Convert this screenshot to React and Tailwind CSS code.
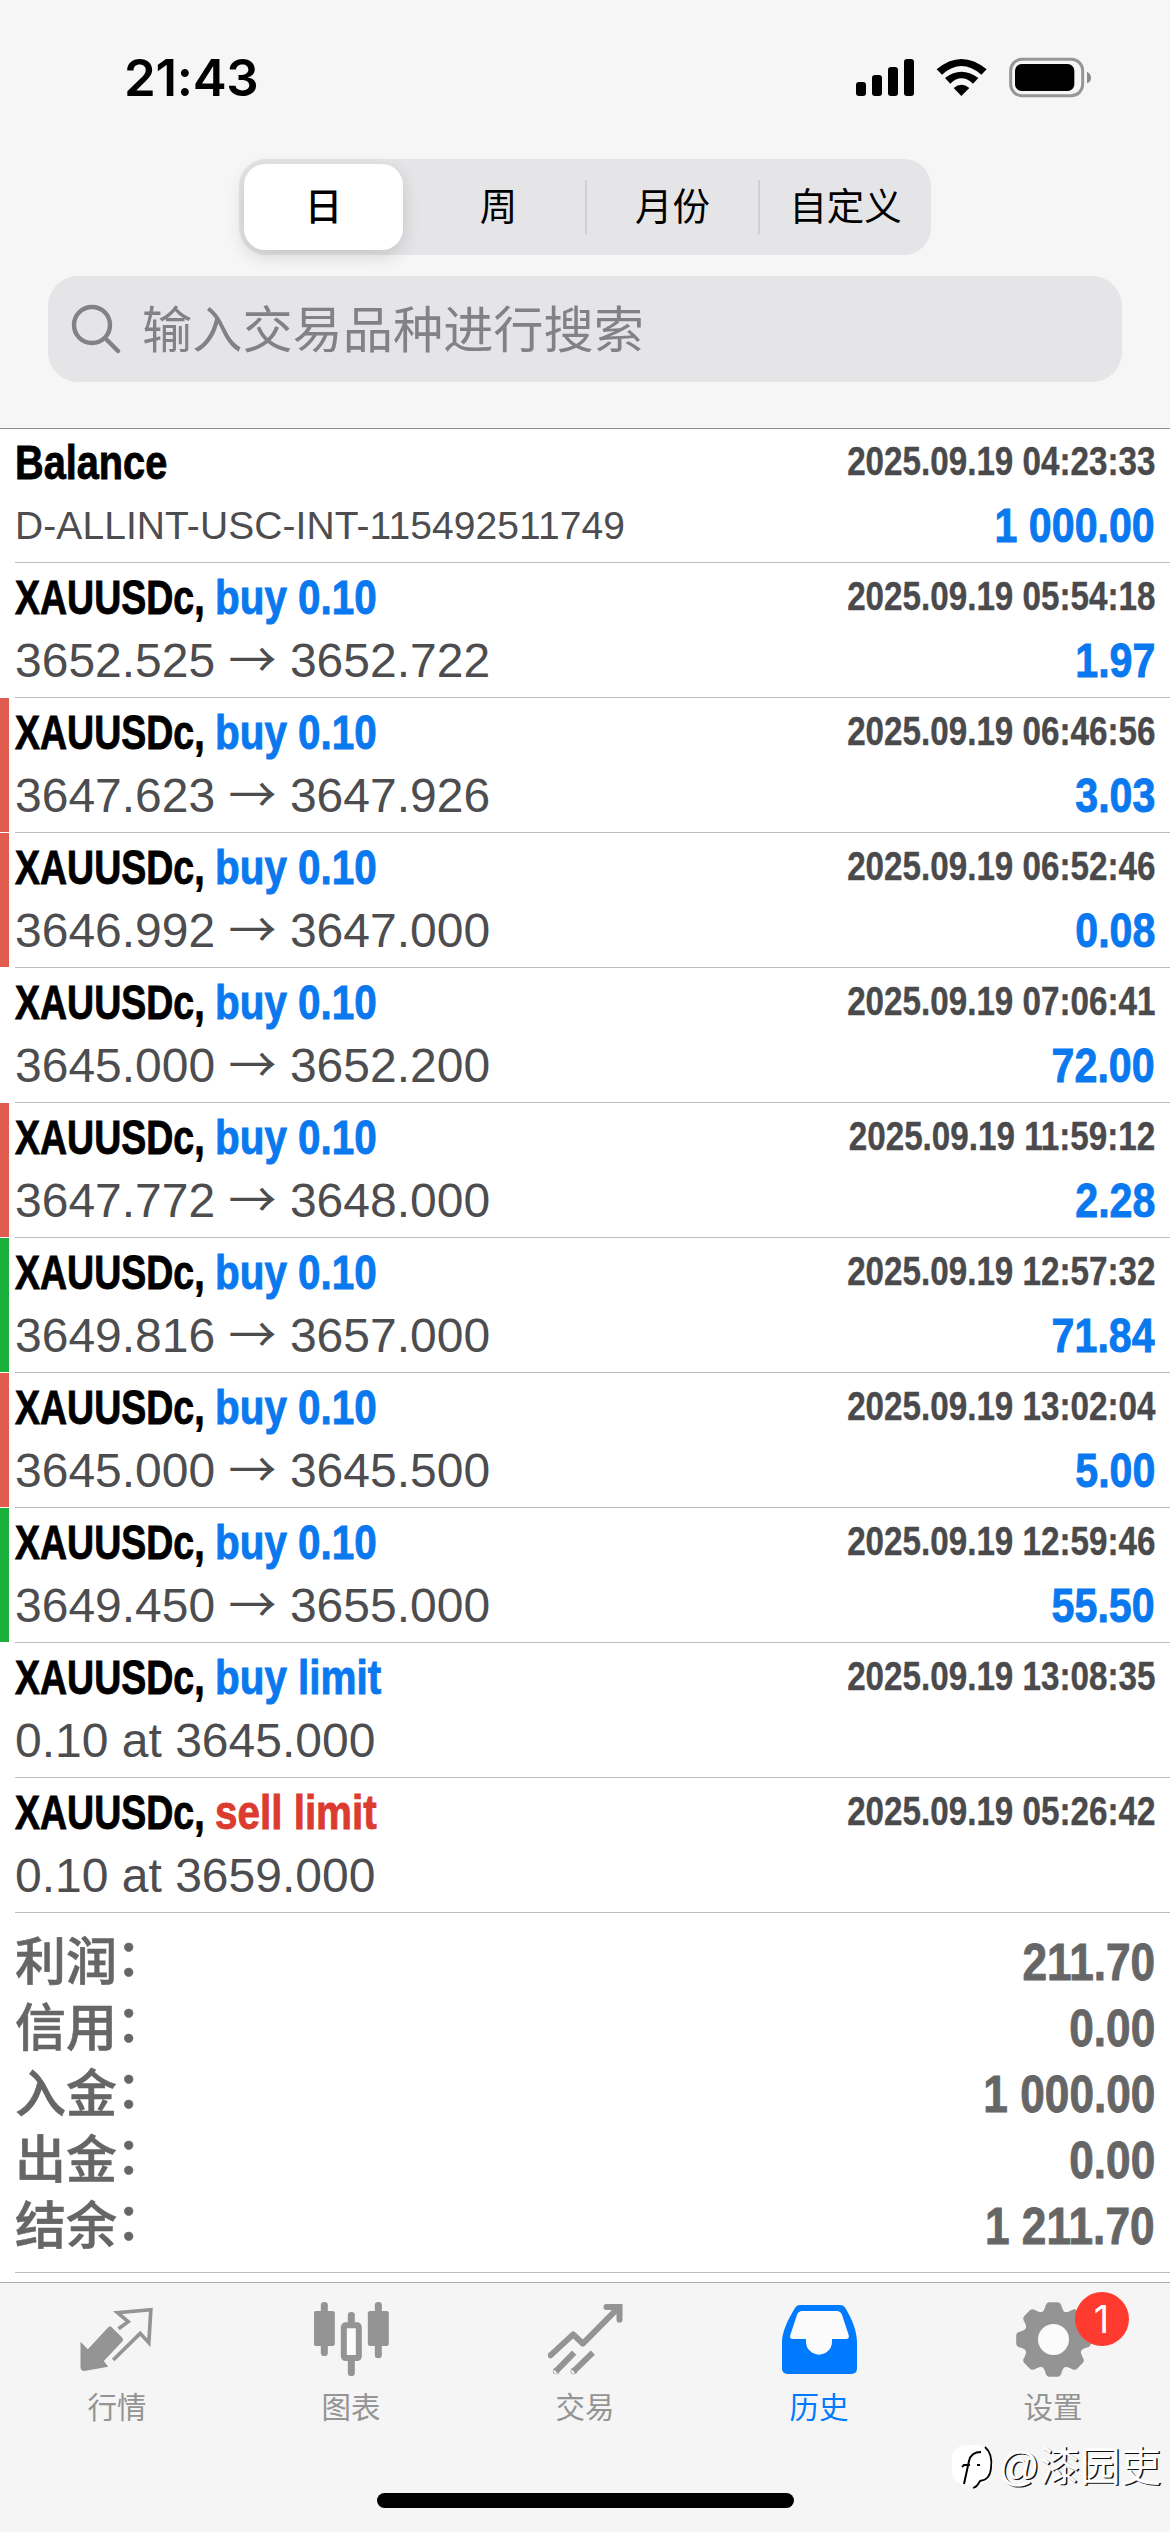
const PERIODS = ['日', '周', '月份', '自定义'];

const DEALS = [
  { open: '3652.525', close: '3652.722', time: '2025.09.19 05:54:18', profit: '1.97' },
  { open: '3647.623', close: '3647.926', time: '2025.09.19 06:46:56', profit: '3.03', hit: 'sl' },
  { open: '3646.992', close: '3647.000', time: '2025.09.19 06:52:46', profit: '0.08', hit: 'sl' },
  { open: '3645.000', close: '3652.200', time: '2025.09.19 07:06:41', profit: '72.00' },
  { open: '3647.772', close: '3648.000', time: '2025.09.19 11:59:12', profit: '2.28', hit: 'sl' },
  { open: '3649.816', close: '3657.000', time: '2025.09.19 12:57:32', profit: '71.84', hit: 'tp' },
  { open: '3645.000', close: '3645.500', time: '2025.09.19 13:02:04', profit: '5.00', hit: 'sl' },
  { open: '3649.450', close: '3655.000', time: '2025.09.19 12:59:46', profit: '55.50', hit: 'tp' },
];

const SUMMARY = [
  ['利润', '211.70'],
  ['信用', '0.00'],
  ['入金', '1 000.00'],
  ['出金', '0.00'],
  ['结余', '1 211.70'],
];

function StatusBar() {
  return (
    <div className="flex h-[155px] items-center justify-between pl-[124px] pr-[78px]">
      <span className="font-['Inter',sans-serif] text-[51px] font-semibold leading-none tracking-[-0.3px]">21:43</span>
      <svg className="h-[41px] w-[236px]" viewBox="48 36 708 123">
        <rect x="48" y="111" width="30" height="42" rx="9" />
        <rect x="96" y="90" width="30" height="63" rx="9" />
        <rect x="144" y="66" width="30" height="87" rx="9" />
        <rect x="192" y="42" width="30" height="111" rx="9" />
        <path d="M290 73Q364 11 440 73L424 89Q364 37 306 89Z" />
        <path d="M315 99Q364 61 415 99L399 116Q364 84 331 116Z" />
        <path d="M341 129Q364 109 388 129L364 153Z" />
        <rect x="512" y="43" width="216" height="109" rx="34" fill="none" stroke="#969696" strokeWidth="9" />
        <rect x="525" y="57" width="178" height="81" rx="20" />
        <path d="M741 80Q753 86 753 98Q753 110 741 115Z" fill="#8a8a8a" />
      </svg>
    </div>
  );
}

function PeriodSwitch() {
  return (
    <div className="mx-auto mt-[4px] flex h-[96px] w-[692px] items-center rounded-[27px] bg-[#e5e5e7] text-[37.5px] leading-none">
      {PERIODS.map((p, i) => (
        <div key={p} className="flex h-full flex-1 items-center">
          <div className={i > 1 ? 'h-[54px] w-[2px] bg-[#d0d0d2]' : 'h-[54px] w-0'} />
          <div
            className={
              i === 0
                ? 'ml-[5px] flex h-[86px] w-[159px] items-center justify-center rounded-[21px] bg-white pt-[2px] font-medium shadow-[0_6px_18px_rgba(0,0,0,0.14)]'
                : 'flex flex-1 items-center justify-center pt-[2px]'
            }
          >
            {p}
          </div>
        </div>
      ))}
    </div>
  );
}

function SearchBox() {
  return (
    <div className="mx-[48px] mt-[21px] flex h-[106px] items-center rounded-[30px] bg-[#e5e5e7] pl-[23px] text-[#828286]">
      <svg className="h-[50px] w-[50px]" viewBox="0 0 50 50" fill="none" stroke="currentColor" strokeWidth="4.4" strokeLinecap="round">
        <circle cx="21" cy="21" r="18" />
        <path d="M34.500 34.500L47 47" />
      </svg>
      <span className="ml-[21px] pt-[5px] text-[50.2px] leading-none">输入交易品种进行搜索</span>
    </div>
  );
}

function Row({ title, detail, time, value, hit }) {
  return (
    <div className="flex h-[135px] gap-[6px]">
      <div className={`h-[134px] w-[9px] ${hit === 'sl' ? 'bg-[#e05c4f]' : hit === 'tp' ? 'bg-[#1bb03c]' : ''}`} />
      <div className="flex-1 border-b border-[#bebec0] pr-[15px]">
        <div className="flex h-[68px] items-start justify-between whitespace-nowrap font-bold">
          <div className="flex text-[49px] leading-[68px] [-webkit-text-stroke:0.9px_currentColor]">{title}</div>
          <span className="origin-right scale-x-[0.83] text-[40px] leading-[66px] text-[#4a4a4c] [-webkit-text-stroke:0.4px_currentColor]">{time}</span>
        </div>
        <div className="flex items-start justify-between whitespace-nowrap leading-[58px]">
          <div className="pt-px text-[48px] text-[#4d4d4f]">{detail}</div>
          <span className="origin-right scale-x-[0.84] text-[49px] font-bold text-[#0a78ee] [-webkit-text-stroke:0.9px_currentColor]">{value}</span>
        </div>
      </div>
    </div>
  );
}

function Title({ side, children }) {
  return (
    <>
      <span className="w-[200px] origin-left scale-x-[0.765]">XAUUSDc,</span>
      <span className={`origin-left scale-x-[0.825] ${side === 'sell' ? 'text-[#dc3c30]' : 'text-[#0a78ee]'}`}>{children}</span>
    </>
  );
}

function QuotesIcon() {
  return (
    <svg className="size-[75px]" viewBox="58.5 36 225 225" fill="currentColor">
      <path d="M60 155L82 178L144 111Q148 106 153 111L186 144Q190 149 186 154L130 213L143 230L72 243Q60 243 60 232Z" />
      <path d="M174 116L203 95L171 68L271 59L265 158L239 130L158 210" fill="none" stroke="currentColor" strokeWidth="11" />
    </svg>
  );
}

function ChartIcon() {
  return (
    <svg className="size-[75px]" viewBox="759.5 36 225 225" fill="currentColor">
      <rect x="759" y="63" width="63" height="105" rx="7" />
      <rect x="780" y="36" width="21" height="162" rx="10" />
      <rect x="921" y="63" width="63" height="105" rx="7" />
      <rect x="942" y="36" width="21" height="169" rx="10" />
      <rect x="861" y="66" width="21" height="40" rx="10" />
      <rect x="861" y="205" width="21" height="53" rx="10" />
      <rect x="849" y="106" width="45" height="98" rx="5" fill="#fbfbfb" stroke="currentColor" strokeWidth="18" />
    </svg>
  );
}

function TradeIcon() {
  return (
    <svg className="size-[75px]" viewBox="22.5 51 225 225" fill="none" stroke="currentColor" strokeWidth="18">
      <path d="M30 211L98 148L127 176L234 68" strokeLinecap="round" strokeLinejoin="round" />
      <path d="M198 66H237V104" strokeLinecap="round" />
      <path d="M46 259L101 203M99 259L157 203" />
      <circle cx="47" cy="258" r="1" />
      <circle cx="100" cy="258" r="1" />
    </svg>
  );
}

function HistoryIcon() {
  return (
    <svg className="size-[75px]" viewBox="723 51 225 225" fill="currentColor">
      <path d="M762 69Q767 60 777 60H897Q908 60 913 69C935 105 948 140 948 172V250Q948 267 931 267H740Q723 267 723 250V172C723 140 740 105 762 69Z" />
      <path d="M783 78H888Q898 78 903 89L923 150Q926 162 915 162H873V170A39 39 0 0 1 795 170V162H756Q744 162 748 150L768 89Q773 78 783 78Z" fill="#fbfbfb" />
    </svg>
  );
}

function SettingsIcon() {
  return (
    <svg className="size-[75px]" viewBox="-112.5 -112.5 225 225" fill="currentColor">
      <circle r="68" fill="#fbfbfb" stroke="currentColor" strokeWidth="43" />
      {[0, 45, 90, 135, 180, 225, 270, 315].map((a) => (
        <path key={a} d="M-36 -80Q-28 -86 -25 -97Q-22 -112 -12 -112H12Q22 -112 25 -97Q28 -86 36 -80Z" transform={`rotate(${a})`} />
      ))}
    </svg>
  );
}

const TABS = [
  { label: '行情', Icon: QuotesIcon },
  { label: '图表', Icon: ChartIcon },
  { label: '交易', Icon: TradeIcon },
  { label: '历史', Icon: HistoryIcon, active: true },
  { label: '设置', Icon: SettingsIcon, badge: 1 },
];

function TabBar() {
  return (
    <nav className="relative mt-[9px] flex h-[250px] flex-col justify-between border-t border-[#a9a9ab] bg-[#f5f5f5]">
      <div className="flex pt-[19px]">
        {TABS.map(({ label, Icon, active, badge }) => (
          <div key={label} className={`flex flex-1 flex-col items-center ${active ? 'text-[#007aff]' : 'text-[#949494]'}`}>
            <div className="relative">
              <Icon />
              {badge && (
                <span className="absolute -right-[38px] -top-[10px] flex size-[54px] items-center justify-center rounded-full bg-[#ff3b30] font-['Inter',sans-serif] text-[38px] leading-none text-white">
                  {badge}
                </span>
              )}
            </div>
            <span className="mt-[16px] text-[29.5px] leading-[30px]">{label}</span>
          </div>
        ))}
      </div>
      <div className="mx-auto mb-[24px] h-[15px] w-[417px] rounded-full bg-black" />
      <Watermark />
    </nav>
  );
}

function Watermark() {
  return (
    <div className="absolute right-[9px] top-[159px] flex items-center gap-[3px]">
      <svg className="h-[50px] w-[44px]" viewBox="0 0 44 50">
        <rect x="1" y="3" width="38" height="40" rx="14" fill="#fff" />
        <path d="M34 5Q42 12 40 26Q39 38 29 39Q26 45 22 46" fill="none" stroke="#000" strokeWidth="1.800" />
        <path d="M30 10Q20 10 18 19L13 42M11 25L13 23H19M26 23H29" fill="none" stroke="#000" strokeWidth="2" />
      </svg>
      <span className="text-[40.5px] leading-[48px] text-white [text-shadow:1.5px_1px_0_#111]">@漆园吏</span>
    </div>
  );
}

export default function App() {
  return (
    <div className="flex h-[2532px] w-[1170px] flex-col overflow-hidden bg-white font-['Liberation_Sans','Noto_Sans_CJK_SC',sans-serif] text-black">
      <header className="relative z-10 h-[429px] border-b border-[#8f8f91] bg-[#f6f6f6]">
        <StatusBar />
        <PeriodSwitch />
        <SearchBox />
      </header>

      <main className="-mt-px">
        <Row
          title={<span className="origin-left scale-x-[0.81]">Balance</span>}
          detail={<span className="block text-[39px] tracking-[0.08px]">D-ALLINT-USC-INT-115492511749</span>}
          time="2025.09.19 04:23:33"
          value="1 000.00"
        />
        {DEALS.map((d) => (
          <Row
            key={d.time}
            title={<Title>buy 0.10</Title>}
            detail={
              <>
                {d.open} <span className="font-['Noto_Sans_CJK_SC'] leading-none">→</span> {d.close}
              </>
            }
            time={d.time}
            value={d.profit}
            hit={d.hit}
          />
        ))}
        <Row title={<Title>buy limit</Title>} detail="0.10 at 3645.000" time="2025.09.19 13:08:35" />
        <Row title={<Title side="sell">sell limit</Title>} detail="0.10 at 3659.000" time="2025.09.19 05:26:42" />

        <div className="ml-[15px] h-[360px] border-b border-[#bebec0] pr-[15px] pt-[16px] text-[#666]">
          {SUMMARY.map(([label, value]) => (
            <div key={label} className="flex h-[66px] items-baseline justify-between whitespace-nowrap">
              <span className="font-['Noto_Sans_CJK_SC'] text-[51px] font-medium leading-[58px] [-webkit-text-stroke:0.6px_currentColor]">
                {label}
                <span className="relative -left-px -top-[4px]">：</span>
              </span>
              <span className="origin-right scale-x-[0.85] text-[52px] font-bold leading-[66px] [-webkit-text-stroke:0.9px_currentColor]">{value}</span>
            </div>
          ))}
        </div>
      </main>

      <TabBar />
    </div>
  );
}
